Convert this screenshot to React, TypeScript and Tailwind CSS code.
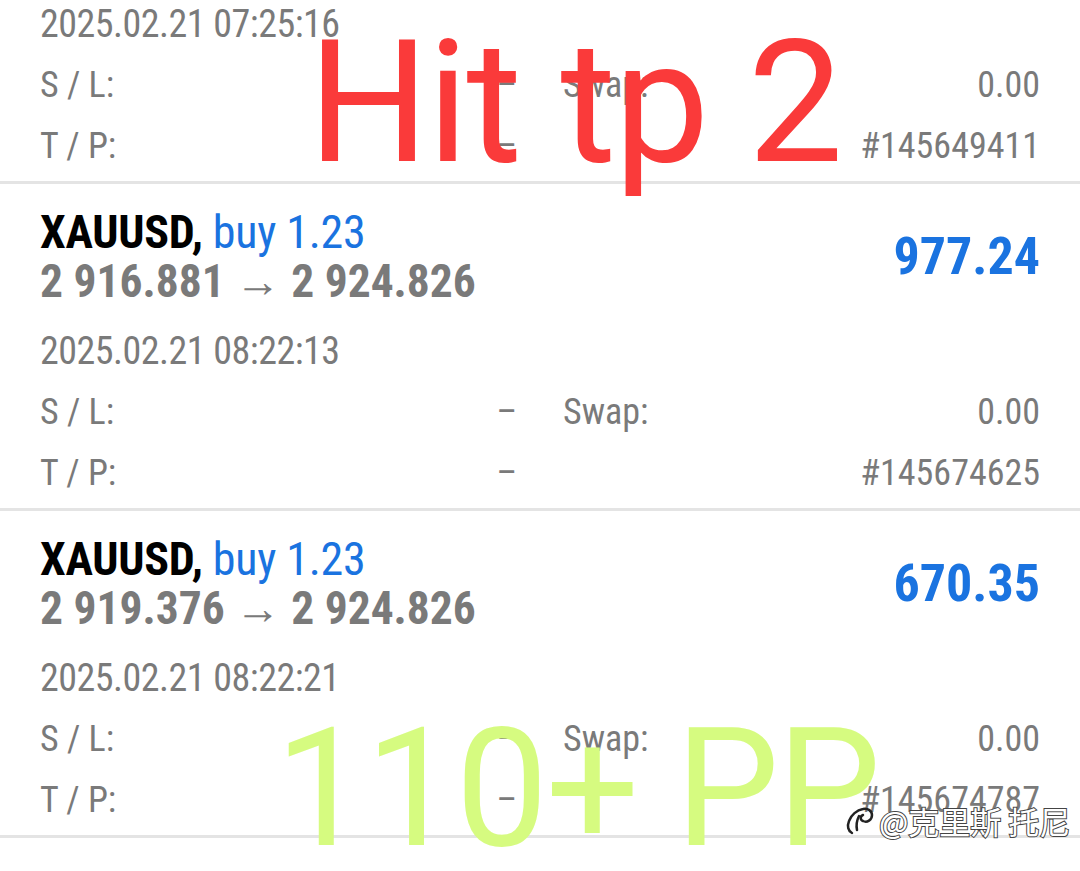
import React from 'react';

type Deal = {
  symbol: string;
  side: string;
  open: string;
  close: string;
  profit: string;
  time: string;
  ticket: string;
};

const deals: Deal[] = [
  {
    symbol: 'XAUUSD',
    side: 'buy 1.23',
    open: '2 913.402',
    close: '2 924.826',
    profit: '1 405.22',
    time: '2025.02.21 07:25:16',
    ticket: '#145649411',
  },
  {
    symbol: 'XAUUSD',
    side: 'buy 1.23',
    open: '2 916.881',
    close: '2 924.826',
    profit: '977.24',
    time: '2025.02.21 08:22:13',
    ticket: '#145674625',
  },
  {
    symbol: 'XAUUSD',
    side: 'buy 1.23',
    open: '2 919.376',
    close: '2 924.826',
    profit: '670.35',
    time: '2025.02.21 08:22:21',
    ticket: '#145674787',
  },
];

const DealRow: React.FC<{ deal: Deal }> = ({ deal }) => (
  <div className="px-[40px] pt-[23px] pb-[4px] border-b-[3px] border-[#e4e4e4]">
    {/* header: symbol / prices / profit */}
    <div className="flex items-center justify-between">
      <div className="flex flex-col">
        <div className="h-[50px] leading-[50px] text-[46px] tracking-[-0.3px]">
          <span className="font-bold text-black">{deal.symbol},</span>{' '}
          <span className="text-[#1a73e0]">{deal.side}</span>
        </div>
        <div className="h-[50px] leading-[50px] text-[45.5px] font-bold text-[#7a7a7a]">
          {deal.open} → {deal.close}
        </div>
      </div>
      <div className="text-[52px] font-bold text-[#1a73e0] leading-none">{deal.profit}</div>
    </div>

    <div className="mt-[13px] h-[62px] leading-[62px] text-[38px] tracking-[-0.5px] text-[#7a7a7a]">
      {deal.time}
    </div>

    <div className="grid grid-cols-2 gap-x-[46px] text-[36px] text-[#7a7a7a]">
      <div className="flex justify-between h-[61px] leading-[61px]">
        <span>S / L:</span>
        <span>–</span>
      </div>
      <div className="flex justify-between h-[61px] leading-[61px]">
        <span>Swap:</span>
        <span>0.00</span>
      </div>
      <div className="flex justify-between h-[61px] leading-[61px]">
        <span>T / P:</span>
        <span>–</span>
      </div>
      <div className="flex justify-end h-[61px] leading-[61px]">
        <span>{deal.ticket}</span>
      </div>
    </div>
  </div>
);

export default function App() {
  return (
    <div className="relative w-[1080px] h-[871px] overflow-hidden bg-white font-['Roboto_Condensed',Roboto,sans-serif]">
      <div className="-mt-[143px]">
        {deals.map((d) => (
          <DealRow key={d.ticket} deal={d} />
        ))}
      </div>

      {/* annotations drawn over the screenshot */}
      <div className="absolute left-[308px] top-[18px] text-[170px] tracking-[-2px] leading-none text-[#fa3a3a] font-['Roboto',sans-serif] whitespace-nowrap">
        Hit tp 2
      </div>
      <div className="absolute left-[275px] top-[706px] text-[165px] tracking-[-2.5px] leading-none text-[#d6fb80] font-['Roboto',sans-serif] whitespace-nowrap">
        110+ PP
      </div>

      {/* watermark */}
      <div className="absolute left-[846px] top-[803px] flex items-center gap-[3px]">
        <svg width="30" height="34" viewBox="0 0 30 34" fill="none">
          <path
            d="M6 30c-4-2-5-7-3-12 2-6 8-11 14-12 5-1 9 2 9 6 0 5-5 8-9 6-3-1-3-5 0-6"
            stroke="#222"
            strokeWidth="2.5"
            strokeLinecap="round"
          />
          <path d="M13 13c-2 4-3 9-2 14" stroke="#222" strokeWidth="2.5" strokeLinecap="round" />
        </svg>
        <span className="text-[31px] leading-none text-white font-['Noto_Sans_CJK_SC',sans-serif] [-webkit-text-stroke:2px_#444] [paint-order:stroke_fill]">
          @克里斯 托尼
        </span>
      </div>
    </div>
  );
}
